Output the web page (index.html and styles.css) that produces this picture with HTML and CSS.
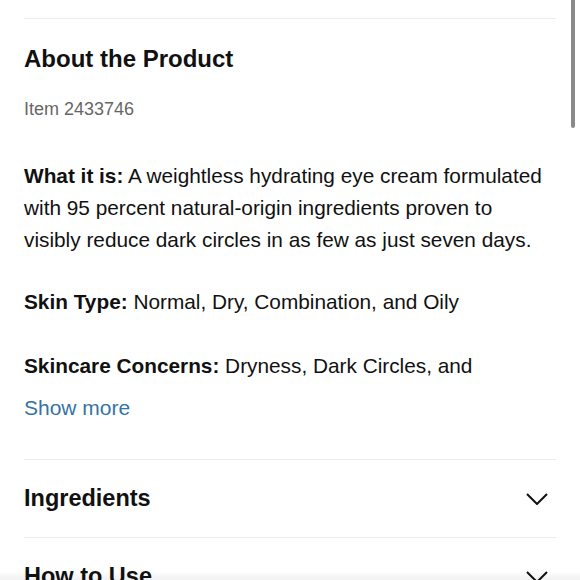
FILE: index.html
```html
<!DOCTYPE html>
<html lang="en">
<head>
<meta charset="utf-8">
<link rel="stylesheet" href="styles.css">
<title>About the Product</title>
</head>
<body>
<main class="page">
  <hr class="rule rule-top">
  <section class="about">
    <h2 class="about-title">About the Product</h2>
    <p class="item-no">Item 2433746</p>
    <p class="desc"><strong>What it is:</strong> A weightless hydrating eye cream formulated with 95 percent natural-origin ingredients proven to visibly reduce dark circles in as few as just seven days.</p>
    <p class="desc desc-skin"><strong>Skin Type:</strong> Normal, Dry, Combination, and Oily</p>
    <p class="desc desc-concerns"><strong>Skincare Concerns:</strong> Dryness, Dark Circles, and</p>
    <a class="show-more" href="#">Show more</a>
  </section>
  <div class="accordion">
    <div class="acc-row">
      <span class="acc-title">Ingredients</span>
      <svg class="chev" width="22" height="12" viewBox="0 0 22 12"><path d="M1 1 L11 11 L21 1" fill="none" stroke="#111" stroke-width="2"/></svg>
    </div>
    <div class="acc-row">
      <span class="acc-title">How to Use</span>
      <svg class="chev" width="22" height="12" viewBox="0 0 22 12"><path d="M1 1 L11 11 L21 1" fill="none" stroke="#111" stroke-width="2"/></svg>
    </div>
  </div>
</main>
<div class="scrollbar"></div>
<div class="bottom-shade"></div>
</body>
</html>
```

FILE: styles.css
```css
html, body {
  margin: 0;
  padding: 0;
  background: #fff;
  overflow: hidden;
  height: 580px;
}
body {
  font-family: "Liberation Sans", Arial, sans-serif;
  color: #111;
}
.page {
  padding: 18px 24px 0 24px;
}
.rule {
  border: 0;
  border-top: 1px solid #ececec;
  margin: 0;
}
.about-title {
  font-size: 24px;
  font-weight: bold;
  line-height: 32px;
  margin: 24px 0 0 0;
  color: #111;
}
.item-no {
  font-size: 18px;
  line-height: 24px;
  color: #666;
  margin: 22px 0 0 0;
}
.desc {
  font-size: 20.8px;
  line-height: 32px;
  margin: 39px 0 0 0;
  max-width: 524px;
  color: #111;
}
.desc strong {
  font-weight: bold;
}
.desc-skin {
  margin-top: 30px;
}
.desc-concerns {
  margin-top: 32px;
}
.show-more {
  display: block;
  font-size: 21px;
  line-height: 32px;
  margin-top: 10px;
  color: #3574a3;
  text-decoration: none;
}
.accordion {
  margin-top: 35px;
}
.acc-row {
  display: flex;
  align-items: center;
  justify-content: space-between;
  height: 77px;
  border-top: 1px solid #ececec;
  padding-right: 8px;
}
.acc-title {
  font-size: 23.5px;
  font-weight: bold;
}
.chev {
  display: block;
}
.scrollbar {
  position: fixed;
  top: 0;
  right: 5px;
  width: 4px;
  height: 128px;
  background: #8a8a8a;
  border-radius: 0 0 2px 2px;
}
.bottom-shade {
  position: fixed;
  left: 0;
  right: 0;
  bottom: 0;
  height: 9px;
  background: linear-gradient(to bottom, rgba(0,0,0,0), rgba(0,0,0,0.06));
}
```
